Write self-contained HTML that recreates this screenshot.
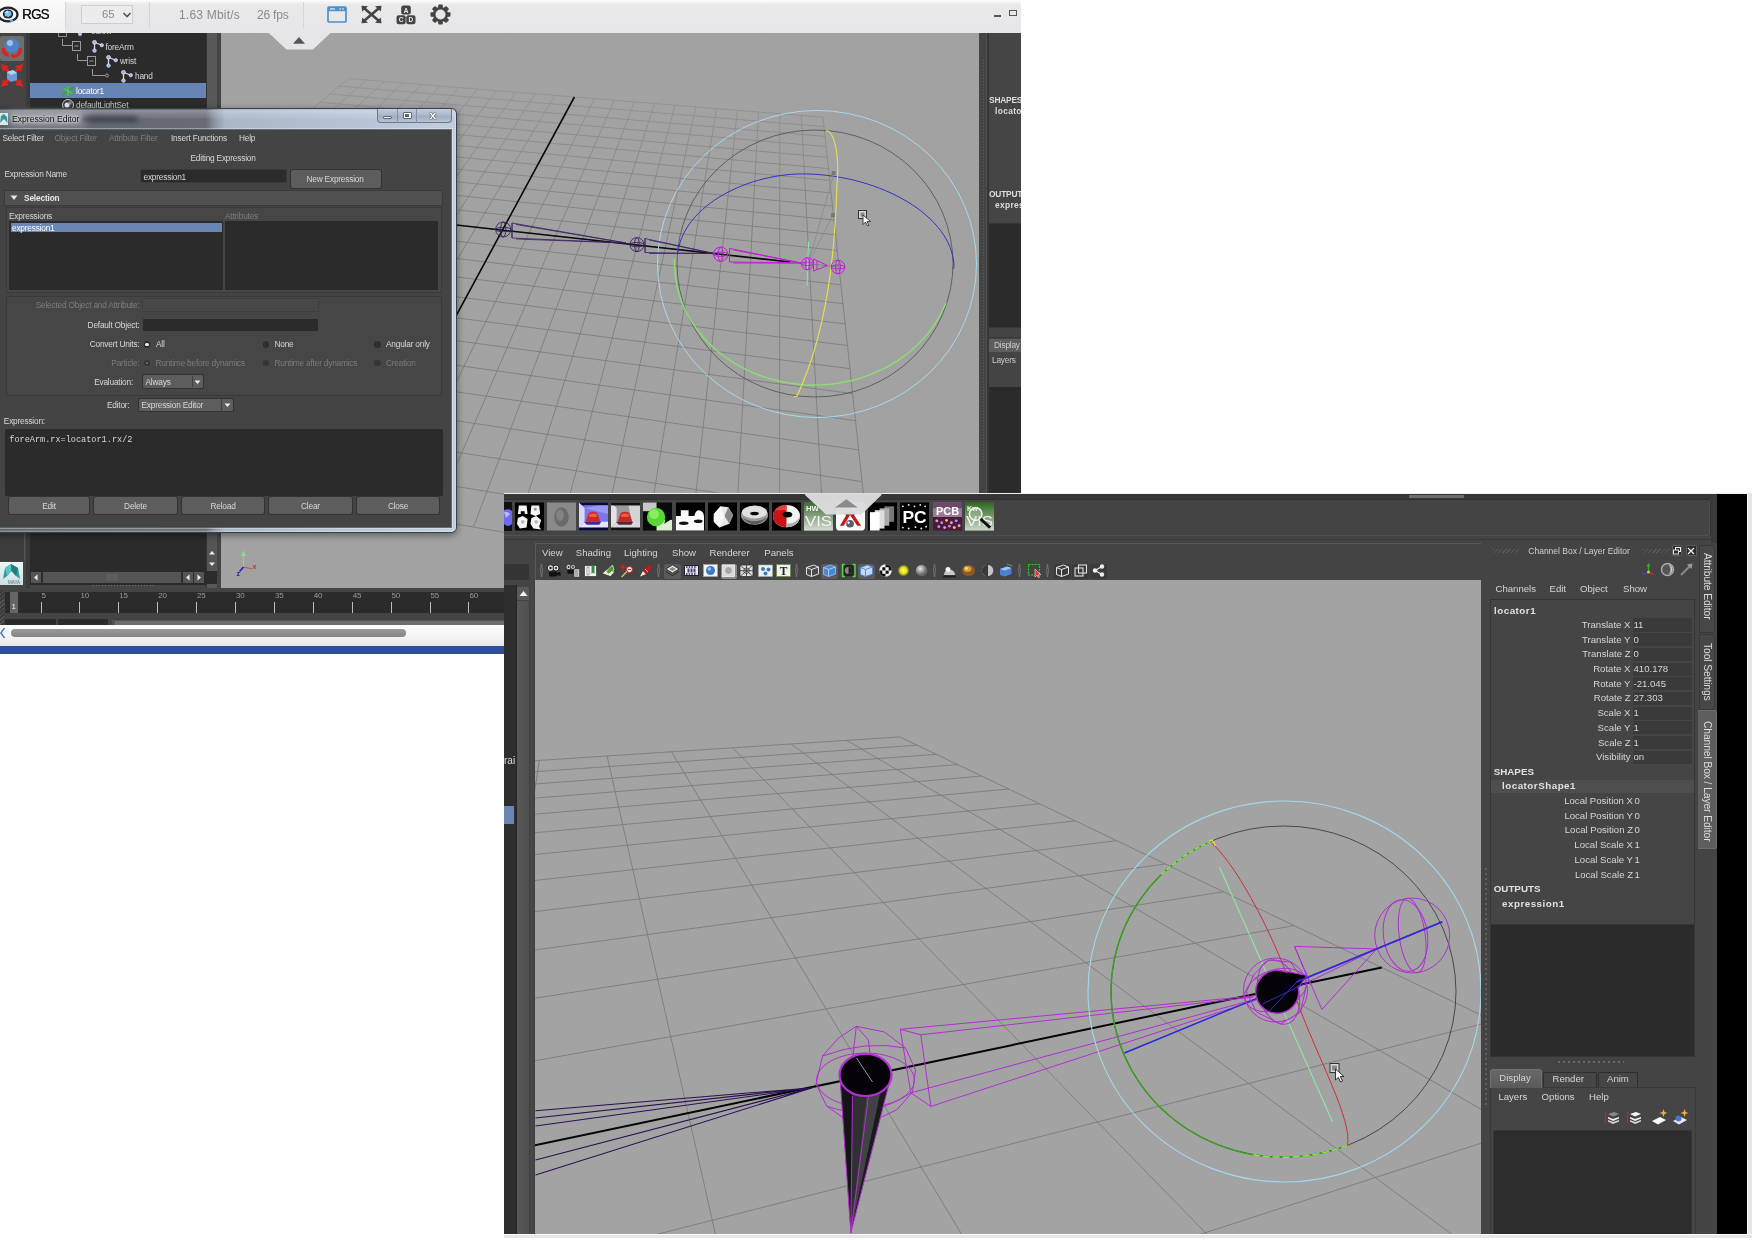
<!DOCTYPE html>
<html><head><meta charset="utf-8"><title>Maya Expression Editor</title>
<style>
html,body{margin:0;padding:0}
body{width:1753px;height:1240px;background:#fff;position:relative;overflow:hidden;font-family:"Liberation Sans",sans-serif}
div,span,svg{position:absolute;box-sizing:border-box}
.t{white-space:nowrap;line-height:1}
#a{will-change:transform;left:0;top:0;width:1021px;height:654px;overflow:hidden;background:#444}
#b{will-change:transform;left:504px;top:493px;width:1248px;height:745px;overflow:hidden;background:#444}
/* image A */
#a .t{font-size:8.3px;color:#d8d8d8;letter-spacing:-0.2px}
#a .dim{color:#7d7d7d}
.fld{background:#2b2b2b;border-radius:1px}
.btn{background:#5d5d5d;border-radius:2px;box-shadow:0 0 0 1px #333;color:#ddd;text-align:center}
/* image B */
#b .t{font-size:9.6px;color:#d6d6d6;letter-spacing:0}
</style></head><body>
<div id="a">
<div style="left:0;top:0;width:1021px;height:33px;background:linear-gradient(#fff 0,#f4f4f5 2px,#e9e9eb 5px,#e6e6e8 100%)"></div>
<div style="left:0;top:1px;width:65px;height:32px;background:linear-gradient(#fafafa,#f0f0f1)"></div>
<div style="left:65px;top:2px;width:1px;height:26px;background:#d6d6d8"></div>
<div style="left:149px;top:2px;width:1px;height:26px;background:#d6d6d8"></div>
<div style="left:303px;top:2px;width:1px;height:26px;background:#d6d6d8"></div>
<svg style="left:0;top:3px" width="20" height="22" viewBox="0 0 20 22"><ellipse cx="8" cy="11.5" rx="9.5" ry="6.8" fill="none" stroke="#222" stroke-width="2.2"/><ellipse cx="8" cy="11" rx="5.2" ry="4.6" fill="#1c2a3a"/><path d="M4.5 9.5 L7.5 7.5 L11 8.5 L11.5 12 L8.5 14 L5 13Z" fill="#7ec3ee"/><path d="M4.5 9.5 L7.5 7.5 L8 10.5Z" fill="#c6e6fa"/><circle cx="11.5" cy="17.5" r="1.6" fill="#6fb4e0"/></svg>
<span class="t" style="left:22px;top:7px;font-size:14.5px;color:#1a1a1a;font-weight:normal;letter-spacing:-0.9px;text-shadow:0.3px 0 0 #1a1a1a;transform-origin:0 0;transform:scaleX(.93)">RGS</span>
<div style="left:81px;top:5px;width:52px;height:19px;border:1px solid #cfcfd2;background:#ececee"></div>
<span class="t" style="left:102px;top:8.5px;font-size:11.5px;color:#8a8a8c">65</span>
<svg style="left:122px;top:11px" width="10" height="8" viewBox="0 0 10 8"><path d="M1.5 2 L5 5.5 L8.5 2" fill="none" stroke="#555" stroke-width="1.6"/></svg>
<span class="t" style="left:179px;top:9px;font-size:12px;letter-spacing:.2px;color:#8a8a8c">1.63 Mbit/s</span>
<span class="t" style="left:257px;top:9px;font-size:12px;color:#8a8a8c">26 fps</span>
<svg style="left:326px;top:5px" width="22" height="19" viewBox="0 0 22 19"><rect x="2" y="2" width="18" height="15" rx="1" fill="none" stroke="#4c8fcf" stroke-width="1.7"/><rect x="2" y="2" width="18" height="4.2" fill="#4c8fcf"/><rect x="4" y="3.3" width="5" height="1.3" fill="#dbe8f5"/><rect x="13.5" y="3.3" width="1.6" height="1.3" fill="#dbe8f5"/><rect x="16.3" y="3.3" width="1.6" height="1.3" fill="#dbe8f5"/></svg>
<svg style="left:361px;top:5px" width="21" height="19" viewBox="0 0 21 19"><path d="M3.5 3.5 L17.5 15.5 M17.5 3.5 L3.5 15.5" stroke="#444" stroke-width="2.6"/><path d="M0.5 0.8 L7 1.2 L1.2 6.5Z M20.5 0.8 L14 1.2 L19.8 6.5Z M0.5 18.2 L7 17.8 L1.2 12.5Z M20.5 18.2 L14 17.8 L19.8 12.5Z" fill="#444"/></svg>
<svg style="left:396px;top:5px" width="20" height="20" viewBox="0 0 20 20"><rect x="5.2" y="0.5" width="9.6" height="9" rx="2.2" fill="#444"/><rect x="0.5" y="10.2" width="9.2" height="9" rx="2.2" fill="#444"/><rect x="10.3" y="10.2" width="9.2" height="9" rx="2.2" fill="#444"/><text x="10" y="7.6" font-size="6.5" font-weight="bold" font-family="Liberation Sans,sans-serif" fill="#eee" text-anchor="middle">A</text><text x="5.1" y="17.2" font-size="6.5" font-weight="bold" font-family="Liberation Sans,sans-serif" fill="#eee" text-anchor="middle">C</text><text x="14.9" y="17.2" font-size="6.5" font-weight="bold" font-family="Liberation Sans,sans-serif" fill="#eee" text-anchor="middle">D</text></svg>
<svg style="left:430px;top:4px" width="21" height="21" viewBox="-10.5 -10.5 21 21"><g fill="#444"><rect x="-2.3" y="-10" width="4.6" height="20" rx="1"/><rect x="-2.3" y="-10" width="4.6" height="20" rx="1" transform="rotate(45)"/><rect x="-2.3" y="-10" width="4.6" height="20" rx="1" transform="rotate(90)"/><rect x="-2.3" y="-10" width="4.6" height="20" rx="1" transform="rotate(135)"/><circle r="7.6"/></g><circle r="5" fill="#e7e7e9"/></svg>
<div style="left:994px;top:15px;width:7px;height:2px;background:#555"></div>
<div style="left:1009px;top:10px;width:8px;height:6px;border:1.5px solid #555"></div>

<div style="left:0;top:33px;width:26px;height:560px;background:#444"></div>
<div style="left:26px;top:33px;width:4px;height:560px;background:#3a3a3a"></div>
<div style="left:30px;top:33px;width:176px;height:552px;background:#2b2b2b"></div>
<div style="left:206px;top:33px;width:15px;height:560px;background:#444"></div>
<div style="left:206px;top:33px;width:1px;height:560px;background:#333"></div><div style="left:207px;top:33px;width:10px;height:560px;background:#585858"></div>
<div style="left:0;top:36px;width:24px;height:25px;background:#6e6e6e;border-radius:2px"></div>
<svg style="left:0;top:36px" width="24" height="25" viewBox="0 0 24 25"><circle cx="12" cy="9.5" r="7" fill="#4f82c8"/><circle cx="10" cy="7" r="3" fill="#9cc0ec"/><path d="M2 12 Q1 20 9 21 L8 17 Q5 16 5 12Z" fill="#d22"/><path d="M22 12 Q23 21 12 22 L11 18 L15 19 Q19 17 19 12Z" fill="#d22"/></svg>
<svg style="left:0;top:63px" width="24" height="25" viewBox="0 0 24 25"><path d="M1 1 L9 3 L3 9Z M23 1 L15 3 L21 9Z M1 24 L9 22 L3 16Z M23 24 L15 22 L21 16Z" fill="#d22"/><path d="M3 3 L10 10 M21 3 L14 10 M3 22 L10 15 M21 22 L14 15" stroke="#d22" stroke-width="2.5"/><path d="M7 9 L13 7 L17 10 L17 17 L11 19 L7 16Z" fill="#6c9ad8"/><path d="M7 9 L13 7 L17 10 L11 12Z" fill="#b4d0f2"/></svg>
<!-- outliner tree -->
<div style="left:30px;top:33px;width:176px;height:10px;overflow:hidden"><span class="t" style="left:61px;top:-6px;color:#bbb">elbow</span><div style="left:28px;top:-5px;width:9px;height:9px;border:1px solid #8a8a8a"></div><div style="left:48px;top:-1px;width:4px;height:4px;border-radius:2px;background:#b8c6e0"></div></div>
<svg style="left:55px;top:33px" width="60" height="50" viewBox="0 0 60 50"><g fill="none" stroke="#9a9a9a" stroke-width="1"><path d="M7.5 6 V12.5 H17"/><rect x="17.5" y="8.5" width="8" height="9"/><path d="M19.5 13 H23.5"/><path d="M22.5 21 V27.5 H32"/><rect x="32.5" y="23.5" width="8" height="9"/><path d="M34.500 28 H38.500"/><path d="M37.500 36 V42.500 H50"/><circle cx="52" cy="42.500" r="1.500"/></g></svg>
<svg style="left:92px;top:40px" width="13" height="13" viewBox="0 0 13 13"><path d="M2.5 2.5 L2.5 10.5 M2.5 2.5 L9.5 5" stroke="#cfd6e4" stroke-width="1.3" fill="none"/><circle cx="2.5" cy="2.3" r="1.9" fill="#9fb2d4" stroke="#e8ecf4" stroke-width=".8"/><circle cx="2.5" cy="10.6" r="1.7" fill="#9fb2d4" stroke="#e8ecf4" stroke-width=".8"/><circle cx="9.8" cy="5.2" r="1.6" fill="#9fb2d4" stroke="#e8ecf4" stroke-width=".8"/></svg><svg style="left:106px;top:55px" width="13" height="13" viewBox="0 0 13 13"><path d="M2.5 2.5 L2.5 10.5 M2.5 2.5 L9.5 5" stroke="#cfd6e4" stroke-width="1.3" fill="none"/><circle cx="2.5" cy="2.3" r="1.9" fill="#9fb2d4" stroke="#e8ecf4" stroke-width=".8"/><circle cx="2.5" cy="10.6" r="1.7" fill="#9fb2d4" stroke="#e8ecf4" stroke-width=".8"/><circle cx="9.8" cy="5.2" r="1.6" fill="#9fb2d4" stroke="#e8ecf4" stroke-width=".8"/></svg><svg style="left:121px;top:70px" width="13" height="13" viewBox="0 0 13 13"><path d="M2.5 2.5 L2.5 10.5 M2.5 2.5 L9.5 5" stroke="#cfd6e4" stroke-width="1.3" fill="none"/><circle cx="2.5" cy="2.3" r="1.9" fill="#9fb2d4" stroke="#e8ecf4" stroke-width=".8"/><circle cx="2.5" cy="10.6" r="1.7" fill="#9fb2d4" stroke="#e8ecf4" stroke-width=".8"/><circle cx="9.8" cy="5.2" r="1.6" fill="#9fb2d4" stroke="#e8ecf4" stroke-width=".8"/></svg>
<span class="t" style="left:105.500px;top:42.500px">foreArm</span>
<span class="t" style="left:120px;top:57px">wrist</span>
<span class="t" style="left:135px;top:71.500px">hand</span>
<div style="left:30px;top:83px;width:176px;height:15px;background:#6785b4"></div>
<svg style="left:61px;top:84px" width="14" height="14" viewBox="-7 -7 14 14"><g stroke="#3da23d" stroke-width="2.2" stroke-linecap="round"><path d="M0 -5.500 V5.500 M-5 -3 L5 3 M-5 3 L5 -3"/></g><g stroke="#7fd07f" stroke-width=".8"><path d="M0 -5 V5 M-4.500 -2.700 L4.500 2.700"/></g></svg>
<span class="t" style="left:76px;top:86.500px;color:#fff">locator1</span>
<svg style="left:61px;top:98px" width="14" height="12" viewBox="0 0 14 12"><circle cx="7" cy="7" r="5.500" fill="#3a3a3a" stroke="#c8c8c8" stroke-width="1"/><circle cx="6" cy="7" r="2.500" fill="#e8e8e8"/><circle cx="9" cy="5" r="1.800" fill="#6d8fc8"/></svg>
<span class="t" style="left:76px;top:101px;color:#c8c8c8">defaultLightSet</span>

<div style="left:221px;top:33px;width:758px;height:556px;background:#a2a2a2"></div>
<svg style="left:221px;top:33px" width="758" height="556" viewBox="221 33 758 556">
<defs><linearGradient id="gfa" gradientUnits="userSpaceOnUse" x1="0" y1="78" x2="0" y2="230"><stop offset="0" stop-color="#939393"/><stop offset="1" stop-color="#7b7b7b"/></linearGradient></defs>
<path d="M348.4 78.5 L-74.9 433.1 M348.4 78.5 L823.0 117.3 M366.4 80.0 L-42.2 438.7 M339.3 86.1 L824.0 126.6 M384.6 81.4 L-9.0 444.4 M329.8 94.0 L825.0 136.4 M403.0 82.9 L24.7 450.2 M319.9 102.3 L826.1 146.6 M421.4 84.5 L58.9 456.1 M309.6 111.0 L827.3 157.3 M440.0 86.0 L93.7 462.0 M298.7 120.1 L828.5 168.6 M458.8 87.5 L129.0 468.1 M287.4 129.6 L829.7 180.4 M477.7 89.1 L164.9 474.2 M275.5 139.5 L831.1 192.9 M496.7 90.6 L201.3 480.5 M263.1 150.0 L832.5 206.1 M515.9 92.2 L238.3 486.8 M250.0 160.9 L834.0 220.1 M535.3 93.8 L275.9 493.3 M236.2 172.5 L835.6 234.8 M554.8 95.4 L314.1 499.8 M221.7 184.6 L837.2 250.5 M574.4 97.0 L353.0 506.5 M206.4 197.5 L839.0 267.1 M594.3 98.6 L392.5 513.2 M190.2 211.0 L840.9 284.8 M614.2 100.2 L432.6 520.1 M173.1 225.3 L842.9 303.7 M634.3 101.9 L473.5 527.1 M154.9 240.5 L845.1 323.9 M654.6 103.6 L515.0 534.2 M135.7 256.7 L847.4 345.5 M675.1 105.2 L557.2 541.5 M115.2 273.8 L849.9 368.7 M695.7 106.9 L600.1 548.8 M93.4 292.1 L852.6 393.7 M716.5 108.6 L643.8 556.3 M70.1 311.6 L855.5 420.7 M737.4 110.3 L688.3 564.0 M45.2 332.5 L858.6 449.9 M758.6 112.1 L733.6 571.7 M18.4 354.9 L862.0 481.6 M779.8 113.8 L779.6 579.6 M-10.3 379.0 L865.7 516.2 M801.3 115.6 L826.5 587.6 M-41.4 405.0 L869.8 554.1 M823.0 117.3 L874.3 595.8 M-74.9 433.1 L874.3 595.8" stroke="url(#gfa)" stroke-width="0.85" fill="none"/>
<path d="M574.4 97.0 L353.0 506.5 M425.0 221.5 L790 262" stroke="#0a0a0a" stroke-width="1.6" fill="none"/>
<ellipse cx="817" cy="264" rx="159.5" ry="153.5" fill="none" stroke="#a8dcec" stroke-width="0.95"/>
<ellipse cx="815" cy="263.5" rx="138" ry="133.5" fill="none" stroke="#585858" stroke-width="0.9"/>
<path d="M678 252 C 684 205, 750 172, 808 174 C 880 176, 952 215, 954 266 C 954 267,953.500 268,953 269" fill="none" stroke="#3034c0" stroke-width="1"/>
<path d="M674.6 258.7 L674.5 266.0 L675.0 273.2 L675.9 280.4 L677.3 287.5 L679.2 294.5 L681.6 301.5 L684.4 308.2 L687.7 314.9 L691.5 321.3 L695.6 327.6 L700.2 333.6 L705.2 339.4 L710.6 344.9 L716.3 350.1 L722.4 355.0 L728.8 359.6 L735.4 363.8 L742.4 367.7 L749.6 371.2 L757.1 374.4 L764.7 377.1 L772.5 379.5 L780.5 381.4 L788.6 383.0 L796.7 384.1 L805.0 384.7 L813.2 385.0 L821.5 384.8 L829.7 384.2 L837.9 383.2 L846.0 381.7 L854.0 379.9 L861.9 377.6 L869.5 374.9 L877.0 371.8 L884.3 368.4 L891.3 364.6 L898.0 360.4 L904.5 355.9 L910.6 351.0 L916.4 345.8 L921.8 340.4 L926.9 334.7 L931.5 328.7 L935.8 322.5 L939.6 316.1 L943.0 309.5 L945.9 302.7" fill="none" stroke="#8bdc74" stroke-width="1.500"/>
<path d="M826 130.500 C 833 131,840 150, 837 185 C 835 250, 828 330, 797 396" fill="none" stroke="#e8e24a" stroke-width="1.1"/>
<path d="M797 396 L794 397" stroke="#e8e24a" stroke-width="1.1"/>
<path d="M834 173 L808 264 L833 215" fill="none" stroke="#8a8a8a" stroke-width="0.8"/>
<rect x="831.500" y="171" width="4" height="4" fill="#7a7a6a"/><rect x="831" y="213" width="4" height="4" fill="#7a7a6a"/>
<path d="M808.600 241.500 L807 286" stroke="#8de8a8" stroke-width="1"/>
<g fill="none" stroke="#3a1f63" stroke-width="0.9"><circle cx="503.2" cy="229.5" r="7.5"/><ellipse cx="503.2" cy="229.5" rx="2.6" ry="7.5"/><ellipse cx="503.2" cy="229.5" rx="7.5" ry="2.2"/></g>
<path d="M512.0 223.0 L626.0 243.0 L512.0 238.0 Z M516.0 224.5 L626.0 243.0 L516.0 239.0 M512.0 223.0 L512.0 238.0" fill="none" stroke="#3a1f63" stroke-width="0.8"/>
<g fill="none" stroke="#3a1f63" stroke-width="0.9"><circle cx="636.9" cy="244.6" r="7.0"/><ellipse cx="636.9" cy="244.6" rx="2.4" ry="7.0"/><ellipse cx="636.9" cy="244.6" rx="7.0" ry="2.1"/></g>
<path d="M645.0 238.5 L714.0 253.5 L645.0 252.5 Z M649.0 240.0 L714.0 253.5 L649.0 253.5 M645.0 238.5 L645.0 252.5" fill="none" stroke="#3a1f63" stroke-width="0.8"/>
<g fill="none" stroke="#c020d0" stroke-width="1"><circle cx="720.7" cy="254.2" r="7.2"/><ellipse cx="720.7" cy="254.2" rx="2.5" ry="7.2"/><ellipse cx="720.7" cy="254.2" rx="7.2" ry="2.2"/></g>
<path d="M729.5 248.4 L801.0 263.0 L729.5 262.0 Z M733.5 249.9 L801.0 263.0 L733.5 263.0 M729.5 248.4 L729.5 262.0" fill="none" stroke="#c020d0" stroke-width="1"/>
<g fill="none" stroke="#c020d0" stroke-width="1"><circle cx="807.5" cy="263.8" r="6.0"/><ellipse cx="807.5" cy="263.8" rx="2.1" ry="6.0"/><ellipse cx="807.5" cy="263.8" rx="6.0" ry="1.8"/></g>
<path d="M813.500 259 L827.500 265.500 L813.500 271 Z M817 260.5 L817 269.500" fill="none" stroke="#c020d0" stroke-width="1"/>
<g fill="none" stroke="#c020d0" stroke-width="1"><circle cx="838.0" cy="267.0" r="6.8"/><ellipse cx="838.0" cy="267.0" rx="2.4" ry="6.8"/><ellipse cx="838.0" cy="267.0" rx="6.8" ry="2.0"/></g>
<g transform="translate(0,-2.500)"><g stroke-width="1.2" fill="none"><path d="M243.500 569.500 V556" stroke="#8ad68a"/><path d="M243.500 569.500 L252 571.5" stroke="#d05050"/><path d="M243.500 569.500 L239.500 574" stroke="#2020c0" stroke-width="1.6"/></g>
<path d="M240.500 558.500 L243.500 553 L246.500 558.500Z" fill="#8ad68a"/>
<text x="252.500" y="571" font-size="7" font-weight="bold" fill="#c83030" font-family="Liberation Sans,sans-serif">x</text><text x="236.500" y="578" font-size="7" font-weight="bold" fill="#2020c0" font-family="Liberation Sans,sans-serif">z</text></g>
<g transform="translate(858,210)"><rect x="0.500" y="0.500" width="8" height="8" fill="#d8d8d8" stroke="#333" stroke-width="1"/><rect x="2.500" y="2.500" width="4" height="4" fill="#888"/><path d="M5 5 L5 14.500 L7.500 12 L9.500 16 L11 15.300 L9 11.500 L12.500 11.500Z" fill="#fff" stroke="#222" stroke-width=".8"/></g>
</svg>
<svg style="left:266px;top:32px" width="66" height="20" viewBox="266 32 66 20"><path d="M268 32 H330.500 V33 L313 49.600 H286.500 L268.800 33Z" fill="#e6e6e8"/><path d="M293 43.800 L299 37 L305 43.800Z" fill="#555"/></svg>
<div style="left:979px;top:33px;width:42px;height:470px;background:#444"></div>
<div style="left:986px;top:33px;width:1px;height:470px;background:#505050"></div><div style="left:987px;top:33px;width:1.500px;height:470px;background:#363636"></div>
<div style="left:988.500px;top:33px;width:33px;height:189px;background:#454545"></div>
<div style="left:987.500px;top:222.500px;width:34px;height:105px;background:#2b2b2b;border:1px solid #363636;border-right:none"></div>
<div style="left:987.500px;top:336.500px;width:34px;height:1px;background:#383838"></div><div style="left:982.500px;top:60px;width:1.500px;height:400px;background:repeating-linear-gradient(0deg,#5a5a5a 0 1.500px,transparent 1.500px 3px)"></div>
<div style="left:988.500px;top:339px;width:33px;height:13px;background:#5d5d5d"></div>
<div style="left:988.500px;top:387px;width:33px;height:108px;background:#2b2b2b"></div>
<span class="t" style="left:989px;top:96px;font-weight:bold;font-size:8.400px;color:#ddd">SHAPES</span>
<span class="t" style="left:995px;top:107px;font-weight:bold;font-size:8.400px;letter-spacing:.35px;color:#ddd">locatorShape1</span>
<span class="t" style="left:989px;top:190px;font-weight:bold;font-size:8.400px;color:#ddd">OUTPUTS</span>
<span class="t" style="left:995px;top:201px;font-weight:bold;font-size:8.400px;letter-spacing:.35px;color:#ddd">expression1</span>
<span class="t" style="left:994px;top:341px;color:#ccc">Display</span>
<span class="t" style="left:992px;top:356px;color:#ccc">Layers</span>

<!-- under expression editor -->
<div style="left:0;top:533px;width:25px;height:28px;background:#3d3d3d;border-right:1px solid #555"></div>
<div style="left:0;top:562px;width:23px;height:23px;background:linear-gradient(#f0f6f6,#c8e0e0)"></div>
<svg style="left:0;top:562px" width="23" height="23" viewBox="0 0 23 23"><path d="M3 17 L5 6 L11 2 L18 6 L20 17 L16 14 L11.500 9 L7 14Z" fill="#2f9a98"/><path d="M5 6 L11 2 L11.500 9 L7 14Z" fill="#5cc4c0"/><path d="M11 2 L18 6 L16 14 L11.500 9Z" fill="#1f7f80"/><text x="8" y="22" font-size="4.500" fill="#567" font-family="Liberation Sans,sans-serif">MAYA</text></svg>
<div style="left:207px;top:533px;width:10px;height:14px;background:#555"></div>
<div style="left:207px;top:548px;width:10px;height:10px;background:#555"></div>
<div style="left:207px;top:559px;width:10px;height:11px;background:#555"></div>
<svg style="left:207px;top:548px" width="10" height="22" viewBox="0 0 10 22"><path d="M2 6.500 L5 3 L8 6.500Z M2 14.500 L5 18 L8 14.500Z" fill="#eee"/></svg>
<div style="left:31px;top:572px;width:10px;height:11px;background:#555"></div>
<div style="left:43px;top:572px;width:138px;height:11px;background:#555"></div>
<div style="left:183px;top:572px;width:10px;height:11px;background:#555"></div>
<div style="left:194px;top:572px;width:10px;height:11px;background:#555"></div>
<div style="left:205px;top:571px;width:12px;height:13px;background:#2b2b2b"></div>
<svg style="left:31px;top:572px" width="175" height="11" viewBox="0 0 175 11"><path d="M6.500 2.500 L3 5.500 L6.500 8.500Z M158.500 2.500 L155 5.500 L158.500 8.500Z M166.500 2.500 L170 5.500 L166.500 8.500Z" fill="#eee"/><path d="M76 2 V9 M78 2 V9 M80 2 V9 M82 2 V9 M84 2 V9 M86 2 V9" stroke="#666" stroke-width="1"/></svg>
<div style="left:93px;top:585px;width:61px;height:1px;background:repeating-linear-gradient(90deg,#777 0 1px,transparent 1px 3px)"></div>
<!-- timeline -->
<div style="left:0;top:588px;width:1021px;height:66px;background:#444"></div>
<div style="left:0;top:590px;width:4px;height:45px;background:repeating-linear-gradient(135deg,#555 0 1px,#3a3a3a 1px 3px)"></div>
<div style="left:5px;top:592px;width:1016px;height:21px;background:#2b2b2b"></div>
<div style="left:10px;top:592px;width:8px;height:21px;background:#666"></div>
<span class="t" style="left:11.500px;top:603px;color:#eee;font-size:8px">1</span>
<div style="left:40.5px;top:602px;width:1px;height:11px;background:#bbb"></div><span class="t" style="left:41.5px;top:592px;color:#999;font-size:8px">5</span><div style="left:79.4px;top:602px;width:1px;height:11px;background:#bbb"></div><span class="t" style="left:80.4px;top:592px;color:#999;font-size:8px">10</span><div style="left:118.3px;top:602px;width:1px;height:11px;background:#bbb"></div><span class="t" style="left:119.3px;top:592px;color:#999;font-size:8px">15</span><div style="left:157.2px;top:602px;width:1px;height:11px;background:#bbb"></div><span class="t" style="left:158.2px;top:592px;color:#999;font-size:8px">20</span><div style="left:196.1px;top:602px;width:1px;height:11px;background:#bbb"></div><span class="t" style="left:197.1px;top:592px;color:#999;font-size:8px">25</span><div style="left:235.0px;top:602px;width:1px;height:11px;background:#bbb"></div><span class="t" style="left:236.0px;top:592px;color:#999;font-size:8px">30</span><div style="left:273.9px;top:602px;width:1px;height:11px;background:#bbb"></div><span class="t" style="left:274.9px;top:592px;color:#999;font-size:8px">35</span><div style="left:312.8px;top:602px;width:1px;height:11px;background:#bbb"></div><span class="t" style="left:313.8px;top:592px;color:#999;font-size:8px">40</span><div style="left:351.7px;top:602px;width:1px;height:11px;background:#bbb"></div><span class="t" style="left:352.7px;top:592px;color:#999;font-size:8px">45</span><div style="left:390.6px;top:602px;width:1px;height:11px;background:#bbb"></div><span class="t" style="left:391.6px;top:592px;color:#999;font-size:8px">50</span><div style="left:429.5px;top:602px;width:1px;height:11px;background:#bbb"></div><span class="t" style="left:430.5px;top:592px;color:#999;font-size:8px">55</span><div style="left:468.4px;top:602px;width:1px;height:11px;background:#bbb"></div><span class="t" style="left:469.4px;top:592px;color:#999;font-size:8px">60</span>
<div style="left:5px;top:619px;width:51px;height:8px;background:#2b2b2b"></div>
<div style="left:58px;top:619px;width:50px;height:8px;background:#2b2b2b"></div>
<div style="left:112px;top:620px;width:909px;height:8px;background:#555"></div>
<div style="left:115px;top:621px;width:906px;height:6px;background:#6e6e6e"></div>
<!-- browser-like scrollbar -->
<div style="left:0;top:624.500px;width:1021px;height:22px;background:linear-gradient(#fdfdfd,#f2f2f4 60%,#e4e4ea)"></div>
<div style="left:11px;top:629px;width:395px;height:7.500px;border-radius:4px;background:linear-gradient(#9a9a9c,#858587)"></div>
<svg style="left:0;top:627px" width="6" height="12" viewBox="0 0 6 12"><path d="M4.5 1 L0.8 6 L4.5 11" fill="none" stroke="#3b78b8" stroke-width="1.300"/></svg>
<div style="left:0;top:646px;width:1021px;height:8px;background:#2f4f99"></div>

<!-- Expression Editor window -->
<div style="left:-8px;top:108.5px;width:463.500px;height:423.500px;border-radius:5px;background:linear-gradient(90deg,#5c6068 0,#62666f 60px,#666b75 214px,#8a929f 222px,#aab5c6 233px,#b4bfd1 330px,#c0cbdc 455px);box-shadow:0 0 0 1px #39414d,0 2px 7px 1px rgba(0,0,0,.45),inset 0 -1.500px 0 rgba(255,255,255,.28),inset -1px 0 0 rgba(255,255,255,.3)"></div>
<div style="left:-8px;top:109.500px;width:462.500px;height:21px;border-radius:5px 5px 0 0;background:linear-gradient(90deg,#5c6068 0,#62666f 60px,#666b75 214px,#8a929f 222px,#aab5c6 233px,#b4bfd1 330px,#c0cbdc 455px)"></div>
<div style="left:-8px;top:109.500px;width:462.500px;height:9px;border-radius:5px 5px 0 0;background:linear-gradient(rgba(255,255,255,.28),rgba(255,255,255,.04))"></div>
<div style="left:8px;top:112px;width:80px;height:14px;border-radius:7px;background:rgba(235,238,245,.38);filter:blur(4px)"></div>
<div style="left:82px;top:116px;width:56px;height:6px;border-radius:3px;background:rgba(30,34,44,.55);filter:blur(2.500px)"></div>
<svg style="left:0;top:113px" width="9" height="13" viewBox="0 0 9 13"><rect x="0" y="0" width="8" height="12" fill="#dfeaea"/><path d="M0 10 L1 3 L4 1 L7 4 L7.500 10 L4 6Z" fill="#2f9a98"/></svg>
<span class="t" style="left:12px;top:114.500px;font-size:8.600px;color:#0c0c10;letter-spacing:0;text-shadow:0 0 3px #fff,0 0 5px #fff">Expression Editor</span>
<!-- caption buttons -->
<div style="left:376.500px;top:108.500px;width:75px;height:14.500px;border:1px solid #6c7888;border-top:none;border-radius:0 0 4px 4px;background:linear-gradient(#c3cede,#a9b6c9 50%,#9eacc2 52%,#b5c2d6)"></div>
<div style="left:397px;top:109px;width:1px;height:13.500px;background:#8593a6"></div>
<div style="left:416px;top:109px;width:1px;height:13.500px;background:#8593a6"></div>
<div style="left:383px;top:115.500px;width:8.500px;height:3.500px;background:#fff;border:1px solid #5a6472;border-radius:1px"></div>
<div style="left:402.500px;top:111.500px;width:9px;height:7.500px;background:#fff;border:1px solid #5a6472;border-radius:1px"></div>
<div style="left:405px;top:114px;width:4px;height:2.500px;background:#5a6472"></div>
<span class="t" style="left:430px;top:109.500px;font-size:10.500px;font-weight:bold;color:#fff;text-shadow:0 0 1px #39414d,0 0 1px #39414d,0 0 1.500px #39414d;letter-spacing:0;transform:scaleX(1.15)">x</span>
<!-- body -->
<div style="left:-2px;top:130px;width:452.800px;height:397px;background:#444;box-shadow:0 0 0 1px rgba(70,80,95,.8),0 0 0 2px rgba(255,255,255,.35)"></div>
<span class="t" style="left:2.500px;top:133.500px">Select Filter</span>
<span class="t dim" style="left:54.500px;top:133.500px">Object Filter</span>
<span class="t dim" style="left:109px;top:133.500px">Attribute Filter</span>
<span class="t" style="left:171px;top:133.500px">Insert Functions</span>
<span class="t" style="left:239px;top:133.500px">Help</span>
<span class="t" style="left:190.500px;top:154px">Editing Expression</span>
<span class="t" style="left:4.500px;top:169.500px">Expression Name</span>
<div class="fld" style="left:141px;top:170px;width:145px;height:12px;box-shadow:0 0 0 1px #3a3a3a"></div>
<span class="t" style="left:143.500px;top:172.500px">expression1</span>
<div class="btn" style="left:291px;top:169.500px;width:90px;height:18.500px"></div>
<span class="t" style="left:306.500px;top:174.500px">New Expression</span>
<!-- Selection header -->
<div style="left:5px;top:191px;width:436.500px;height:13.500px;background:#505050;box-shadow:0 0 0 1px #3a3a3a"></div>
<svg style="left:10px;top:194.500px" width="8" height="6" viewBox="0 0 8 6"><path d="M0.500 0.500 H7.500 L4 5Z" fill="#e6e6e6"/></svg>
<span class="t" style="left:24px;top:193.500px;font-weight:bold;color:#e6e6e6;letter-spacing:-0.150px">Selection</span>
<!-- frame 1 -->
<div style="left:6px;top:206.500px;width:436px;height:86px;border:1px solid #3a3a3a;background:#464646"></div>
<span class="t" style="left:9px;top:211.500px">Expressions</span>
<span class="t dim" style="left:225px;top:211.500px">Attributes</span>
<div class="fld" style="left:9px;top:221px;width:213.500px;height:69px"></div>
<div class="fld" style="left:225px;top:221px;width:212.500px;height:69px"></div>
<div style="left:10.500px;top:222.500px;width:211.500px;height:9.800px;background:#6a86b5"></div>
<span class="t" style="left:12px;top:224px;color:#fff">expression1</span>
<!-- frame 2 -->
<div style="left:6px;top:296px;width:436px;height:100px;border:1px solid #3a3a3a;background:#464646"></div>
<span class="t dim" style="left:0;top:301px;width:139.500px;text-align:right">Selected Object and Attribute:</span>
<div style="left:143px;top:299px;width:175px;height:12px;background:#484848;box-shadow:0 0 0 1px #3f3f3f"></div>
<span class="t" style="left:0;top:321px;width:139.500px;text-align:right">Default Object:</span>
<div class="fld" style="left:143px;top:319px;width:175px;height:12px"></div>
<span class="t" style="left:0;top:340px;width:139.500px;text-align:right">Convert Units:</span>
<div style="left:143.500px;top:341px;width:6.500px;height:6.500px;border-radius:50%;background:#2b2b2b"></div><div style="left:145px;top:342.500px;width:3.500px;height:3.500px;border-radius:50%;background:#eee"></div>
<span class="t" style="left:156px;top:340px">All</span>
<div style="left:262.500px;top:341px;width:6.500px;height:6.500px;border-radius:50%;background:#2e2e2e"></div>
<span class="t" style="left:274.500px;top:340px">None</span>
<div style="left:374px;top:341px;width:6.500px;height:6.500px;border-radius:50%;background:#2e2e2e"></div>
<span class="t" style="left:386px;top:340px">Angular only</span>
<span class="t dim" style="left:0;top:358.500px;width:139.500px;text-align:right">Particle:</span>
<div style="left:143.500px;top:359.500px;width:6.500px;height:6.500px;border-radius:50%;background:#353535"></div><div style="left:145.500px;top:361.500px;width:2.500px;height:2.500px;border-radius:50%;background:#777"></div>
<span class="t dim" style="left:155.500px;top:358.500px">Runtime before dynamics</span>
<div style="left:262.500px;top:359.500px;width:6.500px;height:6.500px;border-radius:50%;background:#353535"></div>
<span class="t dim" style="left:274.500px;top:358.500px">Runtime after dynamics</span>
<div style="left:374px;top:359.500px;width:6.500px;height:6.500px;border-radius:50%;background:#353535"></div>
<span class="t dim" style="left:386px;top:358.500px">Creation</span>
<span class="t" style="left:0;top:377.500px;width:133px;text-align:right">Evaluation:</span>
<div style="left:142.500px;top:375px;width:60.500px;height:12.500px;background:#5d5d5d;border-radius:1.500px;box-shadow:0 0 0 1px #333"></div>
<div style="left:191.500px;top:375.500px;width:1px;height:11.500px;background:#3e3e3e"></div>
<svg style="left:194px;top:379.500px" width="7" height="5" viewBox="0 0 7 5"><path d="M0.500 0.500 H6.500 L3.500 4Z" fill="#eee"/></svg>
<span class="t" style="left:145.500px;top:377.500px">Always</span>
<span class="t" style="left:0;top:401px;width:129.500px;text-align:right">Editor:</span>
<div style="left:139px;top:398.500px;width:94px;height:12.500px;background:#5d5d5d;border-radius:1.500px;box-shadow:0 0 0 1px #333"></div>
<div style="left:221px;top:399px;width:1px;height:11.500px;background:#3e3e3e"></div>
<svg style="left:224px;top:403px" width="7" height="5" viewBox="0 0 7 5"><path d="M0.500 0.500 H6.500 L3.500 4Z" fill="#eee"/></svg>
<span class="t" style="left:141.500px;top:401px">Expression Editor</span>
<span class="t" style="left:3.800px;top:417px">Expression:</span>
<div class="fld" style="left:5px;top:429px;width:438px;height:66.800px"></div>
<span class="t" style="left:9.300px;top:436px;font-family:'Liberation Mono',monospace;font-size:8.550px;letter-spacing:0;color:#d8d8d8">foreArm.rx=locator1.rx/2</span>
<div class="btn" style="left:9px;top:496.800px;width:80px;height:17px"></div><span class="t" style="left:9px;top:501.500px;width:80px;text-align:center">Edit</span>
<div class="btn" style="left:94px;top:496.800px;width:83px;height:17px"></div><span class="t" style="left:94px;top:501.500px;width:83px;text-align:center">Delete</span>
<div class="btn" style="left:182px;top:496.800px;width:82px;height:17px"></div><span class="t" style="left:182px;top:501.500px;width:82px;text-align:center">Reload</span>
<div class="btn" style="left:269px;top:496.800px;width:83px;height:17px"></div><span class="t" style="left:269px;top:501.500px;width:83px;text-align:center">Clear</span>
<div class="btn" style="left:357px;top:496.800px;width:82px;height:17px"></div><span class="t" style="left:357px;top:501.500px;width:82px;text-align:center">Close</span>
</div>
<div id="b">
<div style="left:0px;top:0px;width:1245px;height:1px;background:#f2f2f2"></div>
<div style="left:0px;top:1px;width:1213px;height:5px;background:#363636"></div>
<div style="left:-1px;top:6px;width:1208px;height:37.5px;background:#444;border:1px solid #303030;border-radius:0 3px 3px 0;box-shadow:inset -1px -1px 0 #505050"></div>
<div style="left:905px;top:1.5px;width:55px;height:3.5px;background:#6c6c6c"></div>
<svg style="left:0px;top:9px" width="8" height="29" viewBox="0 0 8 29"><rect width="8" height="29" fill="#111"/><path d="M0 8 Q6 6 8 9 V22 Q4 26 0 22Z" fill="#6a6af0"/><path d="M0 10 Q4 9 6 12 L2 16Z" fill="#b8b8ff"/></svg>
<svg style="left:11px;top:9px" width="29" height="29" viewBox="0 0 30 29"><rect width="30" height="29" fill="#000"/><g fill="#f4f4f4"><path d="M4 3 H12 L13 12 H10 V9 H6 V12 H3Z"/><path d="M17 3 H25 L26 12 L21 14 L16 12Z"/><path d="M3 16 L8 14 L13 17 L12 26 L5 27 L2 22Z"/><path d="M17 16 L22 14 L27 18 L25 25 L27 28 L19 27 L16 22Z"/></g><circle cx="21" cy="7" r="1.5" fill="#999"/><circle cx="8" cy="20" r="2" fill="#bbb"/><circle cx="22" cy="20" r="2" fill="#bbb"/></svg>
<svg style="left:43.12px;top:9px" width="29" height="29" viewBox="0 0 30 29"><rect width="30" height="29" fill="#8a8a8a"/><ellipse cx="15" cy="15" rx="7.5" ry="10" fill="#6a6a6a"/><ellipse cx="13.500" cy="13" rx="4" ry="6" fill="#828282"/></svg>
<svg style="left:75.24px;top:9px" width="29" height="29" viewBox="0 0 30 29"><rect width="30" height="29" fill="#7a78e8"/><rect y="0" width="30" height="3" fill="#0a0a30"/><path d="M0 0 L6 6 V20 L0 26Z" fill="#d8d8f8"/><rect x="6" y="3" width="24" height="18" fill="#7a78e8"/><path d="M6 6 L20 3 H30 V12Z" fill="#a8a6f4" opacity=".7"/><path d="M0 26 L6 20 H30 V26Z" fill="#e4e4fa"/><path d="M7 20 L10 11 Q15 8 19 11 L22 20Z" fill="#d02828"/><path d="M10 13 Q15 10 19 13 L18 15 H11Z" fill="#f06040"/><path d="M5 20 H23 L21 23 H8Z" fill="#3a2aa8"/><rect y="26" width="30" height="3" fill="#0a0a30"/></svg>
<svg style="left:107.36px;top:9px" width="29" height="29" viewBox="0 0 30 29"><rect width="30" height="29" fill="#9a9a9c"/><path d="M0 0 L6 6 V20 L0 26Z" fill="#e8e0e8"/><rect x="6" y="3" width="24" height="18" fill="#9a9a9c"/><path d="M18 3 H30 V21 H22Z" fill="#e6e6e6" opacity=".75"/><rect y="0" width="30" height="3" fill="#111"/><path d="M0 26 L6 20 H30 V26Z" fill="#d8d8dc"/><path d="M7 20 L10 11 Q15 8 19 11 L22 20Z" fill="#c82626"/><path d="M10 13 Q15 10 19 13 L18 15 H11Z" fill="#ee5a3c"/><path d="M5 20 H23 L21 23 H8Z" fill="#4a2a3a"/><rect y="26" width="30" height="3" fill="#111"/></svg>
<svg style="left:139.48px;top:9px" width="29" height="29" viewBox="0 0 30 29"><rect width="30" height="29" fill="#0a0a0a"/><rect width="14" height="9" fill="#c8c8c8"/><rect x="14" y="18" width="16" height="11" fill="#d8f0d0"/><circle cx="13.500" cy="15" r="9.500" fill="#58d838"/><circle cx="11.500" cy="12" r="5" fill="#88f060"/><path d="M20 7 Q26 12 22 22 L28 18 V6Z" fill="#0a0a0a"/></svg>
<svg style="left:171.6px;top:9px" width="29" height="29" viewBox="0 0 30 29"><rect width="30" height="29" fill="#000"/><path d="M0 29 V14 H5 V8 H13 V14 H19 Q20 8 24 8 Q29 9 29 15 V29Z" fill="#fafafa"/><ellipse cx="8" cy="21.500" rx="5" ry="1.700" fill="#111"/><ellipse cx="23" cy="19.500" rx="4.500" ry="1.800" fill="#111"/></svg>
<svg style="left:203.72px;top:9px" width="29" height="29" viewBox="0 0 30 29"><rect width="30" height="29" fill="#000"/><path d="M6 12 L13 4 L21 5 L26 13 L22 22 L12 26 L6 20Z" fill="#e8e8e8"/><path d="M17 14 L21 5 L26 13 L22 22 Z" fill="#8a8a8a"/><path d="M6 12 L13 4 L17 14 L12 26 L6 20Z" fill="#f8f8f8"/></svg>
<svg style="left:235.84px;top:9px" width="29" height="29" viewBox="0 0 30 29"><rect width="30" height="29" fill="#000"/><ellipse cx="15" cy="13" rx="14" ry="10" fill="#9a9a9a"/><ellipse cx="15" cy="10" rx="13" ry="6.500" fill="#e0e0e0"/><ellipse cx="15" cy="11.500" rx="4.500" ry="1.800" fill="#050505"/><path d="M1.500 15 Q15 30 28.500 15 Q15 24 1.500 15Z" fill="#5a5a5a"/></svg>
<svg style="left:267.96px;top:9px" width="29" height="29" viewBox="0 0 30 29"><rect width="30" height="29" fill="#000"/><ellipse cx="15" cy="14" rx="14" ry="11.500" fill="#f2f2f2"/><path d="M15 2.500 A14 11.500 0 0 0 15 25.500Z" fill="#c81414"/><path d="M3 8 Q8 3 15 2.500 V8Z" fill="#e84040"/><ellipse cx="16" cy="12.500" rx="5" ry="3" fill="#050505"/><path d="M15 25.500 A14 11.500 0 0 0 29 14 Q26 22 15 22Z" fill="#b0b0b0"/></svg>
<svg style="left:300.08px;top:9px" width="29" height="29" viewBox="0 0 30 29"><rect width="30" height="29" fill="#6a8a62"/><rect width="30" height="29" fill="url(#gvis)"/><text x="2" y="9" font-size="8" font-weight="bold" fill="#f0fff0" font-family="Liberation Sans,sans-serif">HW</text><text x="1" y="24" font-size="15.500" fill="#f4f4f4" font-family="Liberation Sans,sans-serif" textLength="28" lengthAdjust="spacingAndGlyphs">VIS</text></svg>
<svg style="left:332.2px;top:9px" width="29" height="29" viewBox="0 0 30 29"><rect width="30" height="29" fill="#444"/><rect width="30" height="29" rx="4" fill="#fafafa"/><path d="M4 24 L13 9 L16 9 L26 24 L22 24 L14.500 13 L8 24Z" fill="#c81818"/><circle cx="14.500" cy="22" r="4" fill="#506070"/><circle cx="13" cy="21" r="1.200" fill="#fff"/><path d="M9 10 L12 14 M20 10 L17 14" stroke="#334" stroke-width="1.500"/></svg>
<svg style="left:364.32px;top:9px" width="29" height="29" viewBox="0 0 30 29"><rect width="30" height="29" fill="#000"/><rect x="17" y="4" width="10" height="16" fill="#777"/><rect x="12" y="6" width="10" height="18" fill="#aaa"/><rect x="7" y="8" width="10" height="19" fill="#ddd"/><rect x="2" y="10" width="10" height="19" fill="#fff"/></svg>
<svg style="left:396.44px;top:9px" width="29" height="29" viewBox="0 0 30 29"><rect width="30" height="29" fill="#000"/><g fill="#e8e8e8"><circle cx="3" cy="4" r="1"/><circle cx="9" cy="2.500" r="1"/><circle cx="15" cy="4" r="1"/><circle cx="21" cy="2.500" r="1"/><circle cx="26" cy="4" r="1"/><circle cx="3" cy="26" r="1"/><circle cx="9" cy="27" r="1"/><circle cx="16" cy="25.500" r="1"/><circle cx="22" cy="27" r="1"/><circle cx="27" cy="25" r="1"/></g><text x="2.500" y="21.500" font-size="17" font-weight="bold" fill="#fff" font-family="Liberation Sans,sans-serif" textLength="25" lengthAdjust="spacingAndGlyphs">PC</text></svg>
<svg style="left:428.56px;top:9px" width="29" height="29" viewBox="0 0 30 29"><rect width="30" height="29" fill="#4a1a3a"/><rect width="30" height="15" fill="#9a7a9a"/><rect width="30" height="6" fill="#6a4a6a"/><text x="3" y="12.500" font-size="11" font-weight="bold" fill="#fff" font-family="Liberation Sans,sans-serif" textLength="24" lengthAdjust="spacingAndGlyphs">PCB</text><g><circle cx="4" cy="19" r="1.500" fill="#e8a0c0"/><circle cx="9" cy="21" r="1.500" fill="#c080e0"/><circle cx="14" cy="18.500" r="1.500" fill="#f0d060"/><circle cx="19" cy="21" r="1.500" fill="#e8a0c0"/><circle cx="24" cy="19" r="1.500" fill="#a0a0f0"/><circle cx="6" cy="25" r="1.500" fill="#a0a0f0"/><circle cx="12" cy="26" r="1.500" fill="#e8a0c0"/><circle cx="17" cy="24.500" r="1.500" fill="#c080e0"/><circle cx="22" cy="26" r="1.500" fill="#f0d060"/><circle cx="27" cy="24" r="1.500" fill="#e8a0c0"/></g></svg>
<svg style="left:460.68px;top:9px" width="29" height="29" viewBox="0 0 30 29"><rect width="30" height="29" fill="#3a6a2a"/><rect width="30" height="29" fill="url(#gvis2)"/><text x="1" y="24" font-size="15.500" fill="#eef4ee" font-family="Liberation Sans,sans-serif" textLength="28" lengthAdjust="spacingAndGlyphs">VIS</text><text x="2" y="9" font-size="7.500" font-weight="bold" fill="#f0fff0" font-family="Liberation Sans,sans-serif">Kw</text><circle cx="11" cy="12" r="6.500" fill="rgba(200,220,200,.35)" stroke="#f4f4f4" stroke-width="1.600"/><path d="M16 17 L26 26" stroke="#111" stroke-width="3"/></svg>
<svg width="0" height="0" style="left:0;top:0"><defs><linearGradient id="gvis" x1="0" y1="0" x2="0" y2="1"><stop offset="0" stop-color="#3e6a34"/><stop offset=".5" stop-color="#8aa284"/><stop offset="1" stop-color="#d6dcd4"/></linearGradient><linearGradient id="gvis2" x1="0" y1="0" x2="0" y2="1"><stop offset="0" stop-color="#2e6a1c"/><stop offset=".5" stop-color="#7a9a72"/><stop offset="1" stop-color="#d0d8ce"/></linearGradient></defs></svg>
<svg style="left:299px;top:0px" width="82" height="23" viewBox="803 493 82 23"><path d="M805 493 H881.500 V495 L861.500 514.400 H826 L805 495Z" fill="#dcdcde" fill-opacity=".97"/><path d="M835 507.500 L846.300 499.300 L857.700 507.500Z" fill="#8a8a8a"/></svg>
<div style="left:0px;top:43px;width:1213px;height:8px;background:#444"></div>
<div style="left:0px;top:46px;width:1213px;height:1px;background:#3a3a3a"></div>
<div style="left:0px;top:50px;width:30px;height:691px;background:#444"></div>
<div style="left:0px;top:71px;width:25px;height:15.5px;background:#343434;border-radius:2px"></div>
<div style="left:0px;top:92px;width:11.5px;height:649px;background:#2e2e2e"></div>
<div style="left:11.5px;top:92px;width:1.5px;height:649px;background:#262626"></div>
<div style="left:13px;top:93.5px;width:12px;height:13.5px;background:#5a5a5a;border-radius:1px"></div>
<svg style="left:14.5px;top:97px" width="9" height="7" viewBox="0 0 9 7"><path d="M0.500 6 L4.500 1 L8.500 6Z" fill="#f4f4f4"/></svg>
<div style="left:13px;top:108px;width:12px;height:633px;background:linear-gradient(90deg,#585858,#505050)"></div>
<div style="left:25px;top:92px;width:5.5px;height:649px;background:linear-gradient(90deg,#3e3e3e,#4a4a4a 40%,#404040)"></div>
<span class="t" style="left:0px;top:263px;color:#ddd;font-size:10px">rai</span>
<div style="left:0px;top:312.5px;width:10px;height:18px;background:#6a86b5"></div>
<div style="left:30.5px;top:50px;width:946px;height:37px;background:#444;border-top:1px solid #5a5a5a;border-left:1px solid #5a5a5a"></div>
<span class="t" style="left:38px;top:54.5px;">View</span>
<span class="t" style="left:71.8px;top:54.5px;">Shading</span>
<span class="t" style="left:120px;top:54.5px;">Lighting</span>
<span class="t" style="left:168px;top:54.5px;">Show</span>
<span class="t" style="left:205.6px;top:54.5px;">Renderer</span>
<span class="t" style="left:260.3px;top:54.5px;">Panels</span>
<svg style="left:35px;top:70px" width="5" height="15" viewBox="0 0 5 15"><path d="M2.500 1 Q0.500 7.500 2.500 14 Q4.500 7.500 2.500 1Z" fill="none" stroke="#7a7a7a" stroke-width=".8"/></svg>
<svg style="left:152px;top:70px" width="5" height="15" viewBox="0 0 5 15"><path d="M2.500 1 Q0.500 7.500 2.500 14 Q4.500 7.500 2.500 1Z" fill="none" stroke="#7a7a7a" stroke-width=".8"/></svg>
<svg style="left:290px;top:70px" width="5" height="15" viewBox="0 0 5 15"><path d="M2.500 1 Q0.500 7.500 2.500 14 Q4.500 7.500 2.500 1Z" fill="none" stroke="#7a7a7a" stroke-width=".8"/></svg>
<svg style="left:428px;top:70px" width="5" height="15" viewBox="0 0 5 15"><path d="M2.500 1 Q0.500 7.500 2.500 14 Q4.500 7.500 2.500 1Z" fill="none" stroke="#7a7a7a" stroke-width=".8"/></svg>
<svg style="left:513px;top:70px" width="5" height="15" viewBox="0 0 5 15"><path d="M2.500 1 Q0.500 7.500 2.500 14 Q4.500 7.500 2.500 1Z" fill="none" stroke="#7a7a7a" stroke-width=".8"/></svg>
<svg style="left:541px;top:70px" width="5" height="15" viewBox="0 0 5 15"><path d="M2.500 1 Q0.500 7.500 2.500 14 Q4.500 7.500 2.500 1Z" fill="none" stroke="#7a7a7a" stroke-width=".8"/></svg>
<svg style="left:42px;top:70px" width="15" height="15" viewBox="0 0 15 15"><circle cx="4.500" cy="5" r="3.300" fill="#ddd" stroke="#222" stroke-width="1"/><circle cx="10" cy="5" r="3" fill="#ddd" stroke="#222" stroke-width="1"/><circle cx="4.500" cy="5" r="1.200" fill="#222"/><circle cx="10" cy="5" r="1.100" fill="#222"/><rect x="3" y="8.500" width="8" height="5" rx="1" fill="#111"/><path d="M11 10 L14.500 8.500 V13 L11 12Z" fill="#111"/></svg>
<svg style="left:60.5px;top:70px" width="15" height="15" viewBox="0 0 15 15"><g transform="scale(.8)"><circle cx="4.500" cy="5" r="3.300" fill="#ddd" stroke="#222" stroke-width="1"/><circle cx="10" cy="5" r="3" fill="#ddd" stroke="#222" stroke-width="1"/><circle cx="4.500" cy="5" r="1.200" fill="#222"/><circle cx="10" cy="5" r="1.100" fill="#222"/><rect x="3" y="8.500" width="8" height="5" rx="1" fill="#111"/><path d="M11 10 L14.500 8.500 V13 L11 12Z" fill="#111"/></g><rect x="9" y="6" width="5.500" height="8" fill="#e8e8e8" stroke="#333" stroke-width=".6"/><path d="M10 8 H13.500 M10 10 H13.500 M10 12 H13.500" stroke="#333" stroke-width=".7"/></svg>
<svg style="left:79px;top:70px" width="15" height="15" viewBox="0 0 15 15"><rect x="1.500" y="2.500" width="12" height="11" fill="#f4f4f4" stroke="#333" stroke-width=".7"/><rect x="4" y="4" width="2" height="8" fill="#fff" stroke="#667" stroke-width=".6"/><path d="M8.500 2.500 V11 L10 9.500 L11.500 11 V2.500Z" fill="#2e8a3a"/></svg>
<svg style="left:97px;top:70px" width="15" height="15" viewBox="0 0 15 15"><path d="M1 10.500 L9.500 13.500 L14 8.500 L5.500 6.500Z" fill="#f4f0d8" stroke="#333" stroke-width=".7"/><path d="M5 8.500 L11.500 2 L13 7 L7.500 11Z" fill="#4a9a3a" stroke="#dde8cc" stroke-width=".8"/></svg>
<svg style="left:116px;top:70px" width="15" height="15" viewBox="0 0 15 15"><path d="M3 1 V8 M0 4.500 H6.500" stroke="#d02020" stroke-width="1.300"/><circle cx="9.500" cy="6.500" r="3" fill="#f8e8e8" stroke="#c82020" stroke-width="1"/><path d="M8 6.500 H11" stroke="#c82020" stroke-width="1"/><path d="M1.500 14 L7 8.500" stroke="#d8b070" stroke-width="1.600"/></svg>
<svg style="left:134px;top:70px" width="15" height="15" viewBox="0 0 15 15"><path d="M2 13.500 L5 8 L8 11Z" fill="#f8f0e0"/><path d="M5 8 L11 1.500 L14 4.500 L8 11Z" fill="#c41818"/><path d="M7 6 L10 9" stroke="#f0b0a0" stroke-width="1"/></svg>
<div style="left:160px;top:70.5px;width:17px;height:15px;background:#5a5a5a;border-radius:2px"></div>
<svg style="left:161px;top:70px" width="15" height="15" viewBox="0 0 15 15"><path d="M7.500 2 L14 6 L7.500 10 L1 6Z" fill="#e8e8e8" stroke="#222" stroke-width=".8"/><path d="M1 8.500 L7.500 12.500 L14 8.500" fill="none" stroke="#222" stroke-width=".9"/><path d="M4 6 L7.500 8 L11 6 L7.500 4Z" fill="#888"/></svg>
<svg style="left:180px;top:70px" width="15" height="15" viewBox="0 0 15 15"><rect x="0.500" y="2.500" width="14" height="10" fill="#e8eef8" stroke="#223" stroke-width="1"/><path d="M2 4 H13 M2 11 H13" stroke="#223" stroke-width="1.400" stroke-dasharray="1.500 1.200"/><rect x="3.500" y="5.500" width="2" height="4" fill="#446"/><rect x="6.500" y="5.500" width="2" height="4" fill="#446"/><rect x="9.500" y="5.500" width="2" height="4" fill="#446"/></svg>
<svg style="left:198.5px;top:70px" width="15" height="15" viewBox="0 0 15 15"><rect x="0.500" y="1.500" width="14" height="12" fill="#f4f4f4" stroke="#aaa" stroke-width=".6"/><circle cx="7.500" cy="7.500" r="4.500" fill="#3a78c8"/><circle cx="6.300" cy="6" r="1.800" fill="#9cc4f0"/></svg>
<div style="left:216.5px;top:70.5px;width:16px;height:15px;background:#8a8a8a;border-radius:2px"></div>
<svg style="left:217px;top:70px" width="15" height="15" viewBox="0 0 15 15"><rect x="1.500" y="2" width="12" height="11.500" fill="#d8d8d8" stroke="#f4f4f4" stroke-width=".8"/><circle cx="7.500" cy="7.500" r="4" fill="#a8a8a8" stroke="#eee" stroke-width=".8"/></svg>
<svg style="left:235px;top:70px" width="15" height="15" viewBox="0 0 15 15"><rect x="1" y="2" width="13" height="11.500" fill="#ddd" stroke="#333" stroke-width=".8"/><path d="M1 2 L14 13.500 M14 2 L1 13.500 M7.500 2 V13.500 M1 7.700 H14" stroke="#333" stroke-width=".8"/><circle cx="7.500" cy="7.700" r="2.800" fill="none" stroke="#333" stroke-width=".8"/></svg>
<svg style="left:253.5px;top:70px" width="15" height="15" viewBox="0 0 15 15"><rect x="0.500" y="2" width="14" height="11.500" fill="#eef2e8" stroke="#aaa" stroke-width=".6"/><circle cx="5" cy="6" r="2" fill="#3a78c8"/><circle cx="10.500" cy="6.500" r="2" fill="#3a78c8"/><circle cx="7.500" cy="10.500" r="2" fill="#3a78c8"/></svg>
<svg style="left:271.5px;top:70px" width="15" height="15" viewBox="0 0 15 15"><rect x="0.500" y="1.500" width="14" height="12" fill="#f0f4e8" stroke="#6a8a5a" stroke-width=".8"/><text x="7.500" y="12" text-anchor="middle" font-size="11.500" font-weight="bold" font-family="Liberation Serif,serif" fill="#222">T</text></svg>
<svg style="left:300.5px;top:70px" width="15" height="15" viewBox="0 0 15 15"><path d="M1.500 4.500 L8.500 2 L13.500 4 V11 L6.500 13.500 L1.500 11.500Z" fill="#4a4a4a" stroke="#e4e4e4" stroke-width="1"/><path d="M1.500 4.500 L6.500 6.500 L13.500 4 M6.500 6.500 V13.500" fill="none" stroke="#e4e4e4" stroke-width="1"/></svg>
<div style="left:317px;top:70.5px;width:17px;height:15px;background:#5a5a5a;border-radius:2px"></div>
<svg style="left:318px;top:70px" width="15" height="15" viewBox="0 0 15 15"><path d="M1.500 4.500 L8.500 2 L13.500 4 V11 L6.500 13.500 L1.500 11.500Z" fill="#4a86d8" stroke="#8ab4ec" stroke-width="1"/><path d="M1.500 4.500 L6.500 6.500 L13.500 4 M6.500 6.500 V13.500" fill="none" stroke="#a8c8f4" stroke-width="1"/></svg>
<svg style="left:336.5px;top:70px" width="15" height="15" viewBox="0 0 15 15"><rect x="3" y="2" width="9.500" height="11" fill="#222"/><circle cx="7.500" cy="7.500" r="3.600" fill="#8a8a8a"/><path d="M7.500 3.900 A3.600 3.600 0 0 1 7.500 11.100Z" fill="#222"/><path d="M4 1.500 H1.500 V13.500 H4 M11.500 1.500 H14 V13.500 H11.500" fill="none" stroke="#58d048" stroke-width="1.500"/></svg>
<div style="left:354px;top:70.5px;width:17px;height:15px;background:#5a5a5a;border-radius:2px"></div>
<svg style="left:355px;top:70px" width="15" height="15" viewBox="0 0 15 15"><path d="M1.500 4.500 L8.500 2 L13.500 4 V11 L6.500 13.500 L1.500 11.500Z" fill="#c4daf4" stroke="#5a8ad0" stroke-width="1"/><path d="M1.500 4.500 L6.500 6.500 L13.500 4 M6.500 6.500 V13.500" fill="none" stroke="#5a8ad0" stroke-width="1"/></svg>
<svg style="left:373.5px;top:70px" width="15" height="15" viewBox="0 0 15 15"><circle cx="7.500" cy="7.500" r="6.200" fill="#f4f4f4"/><path d="M7.500 1.300 A6.200 6.200 0 0 1 13.700 7.500 H7.500Z M7.500 13.700 A6.200 6.200 0 0 1 1.300 7.500 H7.500Z" fill="#111"/><path d="M4.400 2.200 A6.200 6.200 0 0 1 7.500 1.300 V4.400 H4.400Z M10.600 4.400 H7.500 V7.500 H10.600Z M4.400 7.500 V10.600 H7.500 V7.500Z" fill="#111" opacity=".0"/><path d="M4.300 4.300 H7.500 V7.500 H4.300Z M7.500 7.500 H10.700 V10.700 H7.500Z" fill="#111"/><path d="M7.500 4.300 H10.700 V7.500 H7.500Z M4.300 7.500 H7.500 V10.700 H4.300Z" fill="#f4f4f4"/></svg>
<svg style="left:392px;top:70px" width="15" height="15" viewBox="0 0 15 15"><circle cx="7.500" cy="7.500" r="6" fill="url(#gyel)"/></svg>
<svg style="left:409.5px;top:70px" width="15" height="15" viewBox="0 0 15 15"><circle cx="7.500" cy="7.500" r="5.800" fill="url(#ggry)"/></svg>
<svg style="left:438px;top:70px" width="15" height="15" viewBox="0 0 15 15"><path d="M2 12.500 H13 L14.500 14.500 H0.500Z" fill="#222"/><path d="M2 12 A5.500 5.500 0 1 1 13 12Z" fill="#c8c8c8"/><circle cx="6" cy="6.500" r="2.500" fill="#f4f4f4"/></svg>
<svg style="left:457px;top:70px" width="15" height="15" viewBox="0 0 15 15"><ellipse cx="7.500" cy="7.500" rx="6.500" ry="5.500" fill="#8a5a20"/><ellipse cx="6.500" cy="6" rx="4" ry="3" fill="#d89838"/><circle cx="5.500" cy="5.500" r="1.400" fill="#f8e0a0"/></svg>
<svg style="left:475.5px;top:70px" width="15" height="15" viewBox="0 0 15 15"><circle cx="7.500" cy="7.500" r="5.800" fill="#c4c4c4"/><path d="M7.500 1.700 A5.800 5.800 0 0 0 7.500 13.300Z" fill="#3a3a3a"/><path d="M7.500 0.500 V14.500" stroke="#222" stroke-width=".8"/></svg>
<svg style="left:494px;top:70px" width="15" height="15" viewBox="0 0 15 15"><path d="M2 6 L9 3.500 L13.500 5 V11 L7 13.500 L2 12Z" fill="#4a80d0"/><path d="M2 6 L9 3.500 L13.500 5 L7 7.500Z" fill="#a0c4f0"/><path d="M9 1 L14.500 3" stroke="#88a" stroke-width="1"/></svg>
<svg style="left:522.5px;top:70px" width="15" height="15" viewBox="0 0 15 15"><rect x="1.500" y="1.500" width="11" height="10.500" fill="none" stroke="#48c838" stroke-width="1.200" stroke-dasharray="1.800 1.300"/><path d="M8 6 V14 L10 12.200 L11.300 14.800 L12.500 14.200 L11.300 11.800 L13.800 11.800Z" fill="#e83030" stroke="#fff" stroke-width=".5"/></svg>
<div style="left:549.5px;top:70.5px;width:17px;height:15px;background:#3a3a3a;border-radius:2px"></div>
<svg style="left:550.5px;top:70px" width="15" height="15" viewBox="0 0 15 15"><path d="M1.500 4.500 L8.500 2 L13.500 4 V11 L6.500 13.500 L1.500 11.500Z" fill="#3a3a3a" stroke="#e8e8e8" stroke-width="1"/><path d="M1.500 4.500 L6.500 6.500 L13.500 4 M6.500 6.500 V13.500" fill="none" stroke="#e8e8e8" stroke-width="1"/></svg>
<div style="left:568px;top:70.5px;width:17px;height:15px;background:#3a3a3a;border-radius:2px"></div>
<svg style="left:569px;top:70px" width="15" height="15" viewBox="0 0 15 15"><rect x="2" y="5" width="8" height="8" fill="none" stroke="#e0e0e0" stroke-width="1.100"/><rect x="5.500" y="2" width="8" height="8" fill="none" stroke="#e0e0e0" stroke-width="1.100"/></svg>
<div style="left:586px;top:70.5px;width:17px;height:15px;background:#3a3a3a;border-radius:2px"></div>
<svg style="left:587px;top:70px" width="15" height="15" viewBox="0 0 15 15"><path d="M4 7.500 L11 3.500 M4 7.500 L11 11.500" stroke="#eee" stroke-width="1.200"/><circle cx="4" cy="7.500" r="2.200" fill="#eee"/><circle cx="11" cy="3.500" r="2.200" fill="#eee"/><circle cx="11" cy="11.500" r="2.200" fill="#eee"/></svg>
<svg width="0" height="0" style="left:0;top:0"><defs><radialGradient id="gyel"><stop offset="0" stop-color="#ffff60"/><stop offset=".55" stop-color="#e0e020"/><stop offset="1" stop-color="#e0e020" stop-opacity="0"/></radialGradient><radialGradient id="ggry" cx=".4" cy=".35"><stop offset="0" stop-color="#e8e8e8"/><stop offset="1" stop-color="#6a6a6a"/></radialGradient></defs></svg>
<div style="left:30.5px;top:87px;width:946px;height:653.5px;background:#a3a3a3"></div>
<svg style="left:30.5px;top:87px" width="946" height="653.5" viewBox="534.5 580 946 653.5">
<path d="M-1828.7 914.8 L-99126.8 14621.4 M-1828.7 914.8 L899.3 736.9 M-1591.6 899.4 L-93707.7 14641.7 M-2118.2 955.6 L916.6 745.2 M-1375.9 885.3 L-88288.7 14661.9 M-2487.3 1007.6 L935.8 754.3 M-1178.8 872.5 L-82869.6 14682.2 M-2974.2 1076.2 L957.1 764.6 M-998.0 860.7 L-77450.6 14702.5 M-3645.8 1170.8 L981.1 776.1 M-831.6 849.8 L-72031.5 14722.7 M-4631.8 1309.7 L1008.3 789.0 M-677.8 839.8 L-66612.4 14743.0 M-6220.5 1533.5 L1039.2 803.8 M-535.4 830.5 L-61193.4 14763.2 M-9207.9 1954.4 L1074.8 820.9 M-403.1 821.9 L-55774.3 14783.5 M-16893.6 3037.1 L1116.1 840.7 M-279.9 813.8 L-50355.3 14803.7 M-81149.7 12089.0 L1164.8 864.0 M-164.8 806.3 L-44936.2 14824.0 M-87907.8 14663.4 L1223.0 891.8 M-57.1 799.3 L-39517.2 14844.2 M-76110.9 14707.5 L1293.6 925.6 M43.9 792.7 L-34098.1 14864.5 M-64313.9 14751.5 L1381.3 967.5 M138.8 786.5 L-28679.0 14884.7 M-52516.9 14795.6 L1493.0 1021.0 M228.2 780.7 L-23260.0 14905.0 M-40720.0 14839.7 L1640.2 1091.4 M312.5 775.2 L-17840.9 14925.2 M-28923.0 14883.8 L1843.0 1188.5 M392.1 770.0 L-12421.9 14945.5 M-17126.0 14927.9 L2140.2 1330.7 M467.4 765.1 L-7002.8 14965.7 M-5329.1 14972.0 L2617.8 1559.2 M538.8 760.4 L-1583.8 14986.0 M6467.9 15016.1 L3511.2 1986.7 M606.6 756.0 L3835.3 15006.2 M18264.8 15060.2 L5782.9 3073.8 M671.0 751.8 L9254.4 15026.5 M30061.8 15104.3 L23385.4 11497.0 M732.2 747.8 L14673.4 15046.8 M790.6 744.0 L20092.5 15067.0 M846.2 740.4 L25511.5 15087.3 M899.3 736.9 L30930.6 15107.5" stroke="#7c7c7c" stroke-width="0.9" fill="none"/>
<path d="M34.4 1250.1 L1381.3 967.5" stroke="#050505" stroke-width="2"/>
<path d="M535 1110.700 L812 1087.700 M535 1126 L812 1087.700 M535 1160 L812 1087.700 M535 1175 L812 1087.700 M535 1118 L790 1090" stroke="#2a1050" stroke-width="1.100" fill="none"/>
<g fill="none" stroke="#b030d0" stroke-width="1"><path d="M815.500 1084 L822 1056 L838 1038 L855.800 1026.300 L884 1032 L905 1048 L915 1070 L912 1092 L896 1110 L872 1121 L846 1120 L826 1106Z"/><ellipse cx="865" cy="1080" rx="49" ry="27"/><path d="M855.800 1026.300 L852 1060 L853 1120 M855.800 1026.300 L868 1040 L876 1118 M822 1056 Q865 1040 905 1048 M826 1106 Q866 1122 912 1092"/></g>
<path d="M839.500 1077 L850.300 1233 L890.500 1076Z" fill="#303032"/><path d="M839.500 1077 L850.300 1233 L852 1096Z" fill="#141416"/><path d="M866 1096 L850.300 1233 L880 1092Z" fill="#424244"/><path d="M880 1092 L850.300 1233 L890.500 1076Z" fill="#1a1a1c"/>
<ellipse cx="865" cy="1075" rx="26" ry="21" fill="#050208" stroke="#b030d0" stroke-width="2.200"/>
<path d="M839.500 1077 L850.300 1233 L890.500 1076 M852 1096 L850.300 1233 M868 1096 L850.300 1233" fill="none" stroke="#b030d0" stroke-width="1"/>
<path d="M856 1058 L872 1082" stroke="#bbb" stroke-width=".8"/>
<path d="M899.800 1029.300 L920.300 1034.800 L930.400 1106.400 L910.300 1092.900Z M899.800 1029.300 L1253 996 M920.300 1034.800 L1253 997 M930.400 1106.400 L1256 1000 M910.300 1092.900 L1256 999" fill="none" stroke="#b030d0" stroke-width="1"/>
<ellipse cx="1284" cy="991.500" rx="196.500" ry="190.500" fill="none" stroke="#a2d8ee" stroke-width="1.100"/>
<ellipse cx="1283" cy="991.600" rx="172.500" ry="165.600" fill="none" stroke="#484848" stroke-width="1"/>
<path d="M1347.6 1145.1 L1339.3 1148.1 L1330.8 1150.7 L1322.2 1152.9 L1313.5 1154.6 L1304.8 1155.9 L1295.9 1156.7 L1287.1 1157.2 L1278.2 1157.1 L1269.3 1156.7 L1260.5 1155.8 L1251.7 1154.5 L1243.0 1152.7 L1234.4 1150.5 L1226.0 1147.9 L1217.7 1144.9 L1209.6 1141.4 L1201.6 1137.6 L1193.9 1133.4 L1186.4 1128.8 L1179.2 1123.9 L1172.2 1118.5 L1165.6 1112.9 L1159.2 1106.9 L1153.2 1100.7 L1147.5 1094.1 L1142.2 1087.3 L1137.3 1080.2 L1132.7 1072.9 L1128.6 1065.4 L1124.8 1057.6 L1121.5 1049.7 L1118.6 1041.7 L1116.1 1033.5 L1114.1 1025.2 L1112.5 1016.8 L1111.4 1008.3 L1110.7 999.8 L1110.5 991.3 L1110.7 982.8 L1111.4 974.3 L1112.6 965.8 L1114.2 957.5 L1116.3 949.2 L1118.8 941.0 L1121.7 932.9 L1125.0 925.0 L1128.8 917.3 L1133.0 909.8 L1137.6 902.5 L1142.6 895.4 L1147.9 888.6 L1153.6 882.1 L1159.6 875.8 L1166.0 869.9 L1172.7 864.3 L1179.7 859.0 L1186.9 854.1 L1194.4 849.5 L1202.1 845.3 L1210.1 841.5" fill="none" stroke="#3aa020" stroke-width="1.500"/>
<path d="M1347.6 1145.1 L1346.1 1145.7 L1344.6 1146.3 L1343.1 1146.8 L1341.6 1147.3 L1340.1 1147.9 L1338.6 1148.4 L1337.1 1148.9 L1335.5 1149.3 L1334.0 1149.8 L1332.5 1150.2 L1330.9 1150.7 L1329.4 1151.1 L1327.8 1151.5 L1326.3 1151.9 L1324.7 1152.3 L1323.2 1152.6 L1321.6 1153.0 L1320.0 1153.3 L1318.5 1153.7 L1316.9 1154.0 L1315.3 1154.3 L1313.7 1154.5 L1312.2 1154.8 L1310.6 1155.1 L1309.0 1155.3 L1307.4 1155.5 L1305.8 1155.7 L1304.2 1155.9 L1302.6 1156.1 L1301.0 1156.3 L1299.4 1156.4 L1297.8 1156.6 L1296.2 1156.7 L1294.6 1156.8 L1293.0 1156.9 L1291.4 1157.0 L1289.8 1157.1 L1288.2 1157.1 L1286.6 1157.2 L1285.0 1157.2 L1283.4 1157.2 L1281.8 1157.2 L1280.2 1157.2 L1278.6 1157.1 L1277.0 1157.1 L1275.4 1157.0 L1273.8 1157.0 L1272.2 1156.9 L1270.6 1156.8 L1269.0 1156.7 L1267.4 1156.5 L1265.8 1156.4 L1264.2 1156.2 L1262.6 1156.0 L1261.0 1155.8 L1259.4 1155.6 L1257.8 1155.4 L1256.2 1155.2 L1254.6 1154.9 L1253.0 1154.7" fill="none" stroke="#8ee060" stroke-width="1.500" stroke-dasharray="7 3"/>
<path d="M1161.0 874.5 L1161.7 873.8 L1162.5 873.1 L1163.2 872.5 L1163.9 871.8 L1164.6 871.1 L1165.4 870.5 L1166.1 869.8 L1166.8 869.2 L1167.6 868.5 L1168.3 867.9 L1169.1 867.3 L1169.8 866.6 L1170.6 866.0 L1171.4 865.4 L1172.1 864.7 L1172.9 864.1 L1173.7 863.5 L1174.4 862.9 L1175.2 862.3 L1176.0 861.7 L1176.8 861.1 L1177.6 860.5 L1178.4 859.9 L1179.2 859.3 L1180.0 858.8 L1180.8 858.2 L1181.6 857.6 L1182.4 857.1 L1183.2 856.5 L1184.1 855.9 L1184.9 855.4 L1185.7 854.9 L1186.5 854.3 L1187.4 853.8 L1188.2 853.2 L1189.0 852.7 L1189.9 852.2 L1190.7 851.7 L1191.6 851.2 L1192.4 850.7 L1193.3 850.2 L1194.2 849.7 L1195.0 849.2 L1195.9 848.7 L1196.8 848.2 L1197.6 847.7 L1198.5 847.2 L1199.4 846.8 L1200.2 846.3 L1201.1 845.8 L1202.0 845.4 L1202.9 844.9 L1203.8 844.5 L1204.7 844.0 L1205.6 843.6 L1206.5 843.2 L1207.4 842.8 L1208.3 842.3 L1209.2 841.9 L1210.1 841.5" fill="none" stroke="#8ee060" stroke-width="1.500" stroke-dasharray="5 2"/>
<path d="M1211.800 843.500 C 1240 870, 1275 940, 1296 1000 C 1318 1060, 1352 1120, 1347 1146" fill="none" stroke="#cc3030" stroke-width="1"/>
<path d="M1209 841 Q1212 838 1215 846" fill="none" stroke="#e8e040" stroke-width="1.300"/>
<path d="M1219 867 L1332 1121.700" stroke="#8ee8a0" stroke-width="1.100"/>
<path d="M1124 1053 L1441.800 921.800" stroke="#2828d8" stroke-width="1.400"/>
<g fill="none" stroke="#b030d0" stroke-width="1"><circle cx="1275" cy="990" r="32"/><ellipse cx="1275" cy="990" rx="32" ry="20" transform="rotate(-20 1275 990)"/><ellipse cx="1278" cy="992" rx="20" ry="33" transform="rotate(-15 1278 992)"/><path d="M1253 975 L1268 960 L1290 962 L1306 985 L1300 1012 L1280 1024 L1256 1012 L1246 992Z"/></g>
<path d="M1283 971 L1306.500 975.500 L1296 990Z" fill="#050208" stroke="#b030d0" stroke-width="1.200"/><circle cx="1276.700" cy="991.800" r="21.500" fill="#050208" stroke="#b030d0" stroke-width="1.500"/><path d="M1286 972.500 L1304 976 L1296.500 987Z" fill="#050208"/>
<path d="M1262 1004 L1312 980 M1268 1012 L1300 978" stroke="#3030c0" stroke-width="1"/>
<path d="M1294 946.400 L1376 949 L1321.400 1009.400Z M1294 946.400 L1310 985 M1312 980 L1376 949" fill="none" stroke="#b030d0" stroke-width="1"/>
<g fill="none" stroke="#b030d0" stroke-width="1"><circle cx="1411.700" cy="935.500" r="37.500"/><ellipse cx="1411.700" cy="935.500" rx="13" ry="37.500" transform="rotate(-8 1411.700 935.500)"/><ellipse cx="1405" cy="935.500" rx="22" ry="36" transform="rotate(-8 1405 935.500)"/></g>
<path d="M1296 982 L1441.800 921.800" stroke="#3a28d8" stroke-width="1.600"/>
<g transform="translate(1329,1063)"><rect x="0.500" y="0.500" width="9" height="9" fill="#d8d8d8" stroke="#333" stroke-width="1"/><rect x="2.500" y="2.500" width="5" height="5" fill="#888"/><path d="M6 6 L6 17 L8.800 14.300 L11 19 L13 18 L10.800 13.500 L14.500 13.500Z" fill="#fff" stroke="#222" stroke-width=".9"/></g>
</svg>
<div style="left:976.5px;top:50px;width:237px;height:691px;background:#444"></div>
<div style="left:1213px;top:1px;width:29.8px;height:739.8px;background:#000"></div>
<div style="left:1242.8px;top:0px;width:5.2px;height:742px;background:linear-gradient(90deg,#fff 0,#fff 1.200px,#e5e5e5 1.200px,#e5e5e5 4.800px,#fff 5.200px)"></div>
<div style="left:0px;top:740.8px;width:1244px;height:4.2px;background:linear-gradient(#fff 0,#fff 1.200px,#e6e6e6 1.200px,#e6e6e6 3.800px,#fff 4.200px)"></div>
<div style="left:1207px;top:2px;width:6px;height:48px;background:#3a3a3a"></div>
<div style="left:1244px;top:740.8px;width:4px;height:4.2px;background:#fff"></div>
<div style="left:1244px;top:742px;width:3.6px;height:2.6px;background:#e6e6e6"></div>
<div style="left:989px;top:56px;width:26px;height:4px;background:repeating-linear-gradient(135deg,#5a5a5a 0 1px,transparent 1px 3px)"></div>
<div style="left:1139px;top:56px;width:26px;height:4px;background:repeating-linear-gradient(135deg,#5a5a5a 0 1px,transparent 1px 3px)"></div>
<span class="t" style="left:1024.3px;top:53.5px;font-size:8.500px;letter-spacing:0;color:#d0d0d0">Channel Box / Layer Editor</span>
<div style="left:1167.5px;top:52px;width:10.5px;height:11px;border:1px solid #5c5c5c;border-radius:1px;background:#2c2c2c"></div>
<svg style="left:1169px;top:53.5px" width="8" height="8" viewBox="0 0 8 8"><rect x="2.500" y="0.500" width="5" height="4" fill="none" stroke="#eee" stroke-width="1"/><rect x="0.500" y="3" width="5" height="4" fill="#2c2c2c" stroke="#ddd" stroke-width="1"/></svg>
<div style="left:1181.5px;top:52px;width:11px;height:11px;border:1px solid #5c5c5c;border-radius:1px;background:#2c2c2c"></div>
<svg style="left:1183px;top:53.5px" width="8" height="8" viewBox="0 0 8 8"><path d="M1 1 L7 7 M7 1 L1 7" stroke="#eee" stroke-width="1.300"/></svg>
<svg style="left:1136px;top:69px" width="16" height="15" viewBox="0 0 16 15"><path d="M8.500 10 V2.500" stroke="#30b030" stroke-width="1.300"/><path d="M6.500 4.500 L8.500 1 L10.500 4.500Z" fill="#30b030"/><path d="M8.500 10 L14 13" stroke="#d03030" stroke-width="1.300"/><path d="M8.500 10 L2.500 12.500" stroke="#3050d0" stroke-width="1.300"/><circle cx="8.500" cy="10" r="1.500" fill="#e8c030"/></svg>
<svg style="left:1156px;top:69px" width="15" height="15" viewBox="0 0 15 15"><circle cx="7.500" cy="7.500" r="6" fill="#555" stroke="#aaa" stroke-width="1.500"/><path d="M7.500 2.500 A5 5 0 0 1 7.500 12.500 A3 5 0 0 0 7.500 2.500Z" fill="#ccc"/></svg>
<svg style="left:1175px;top:69px" width="15" height="15" viewBox="0 0 15 15"><path d="M2 13 L11 4" stroke="#8a8a8a" stroke-width="2"/><path d="M8 2.500 L13.500 1.500 L12.500 7Z" fill="#9a9a9a"/></svg>
<span class="t" style="left:991.5px;top:91px;">Channels</span>
<span class="t" style="left:1045.5px;top:91px;">Edit</span>
<span class="t" style="left:1076px;top:91px;">Object</span>
<span class="t" style="left:1119px;top:91px;">Show</span>
<div style="left:986px;top:106px;width:205px;height:326px;background:#454545;border:1px solid #363636"></div>
<div style="left:986px;top:431.5px;width:205px;height:132px;background:#2b2b2b;border:1px solid #363636;border-top:none"></div>
<span class="t" style="left:990px;top:112.5px;font-weight:bold;font-size:9.800px;color:#e0e0e0;letter-spacing:0.500px">locator1</span>
<div style="left:1128.5px;top:125.4px;width:59px;height:13.2px;background:#3a3a3a"></div>
<span class="t" style="left:926.5px;top:126.9px;width:200px;text-align:right;">Translate X</span>
<span class="t" style="left:1129.5px;top:126.9px;">11</span>
<div style="left:1128.5px;top:140.1px;width:59px;height:13.2px;background:#3a3a3a"></div>
<span class="t" style="left:926.5px;top:141.6px;width:200px;text-align:right;">Translate Y</span>
<span class="t" style="left:1129.5px;top:141.6px;">0</span>
<div style="left:1128.5px;top:154.8px;width:59px;height:13.2px;background:#3a3a3a"></div>
<span class="t" style="left:926.5px;top:156.3px;width:200px;text-align:right;">Translate Z</span>
<span class="t" style="left:1129.5px;top:156.3px;">0</span>
<div style="left:1128.5px;top:169.5px;width:59px;height:13.2px;background:#3a3a3a"></div>
<span class="t" style="left:926.5px;top:171px;width:200px;text-align:right;">Rotate X</span>
<span class="t" style="left:1129.5px;top:171px;">410.178</span>
<div style="left:1128.5px;top:184.2px;width:59px;height:13.2px;background:#3a3a3a"></div>
<span class="t" style="left:926.5px;top:185.7px;width:200px;text-align:right;">Rotate Y</span>
<span class="t" style="left:1129.5px;top:185.7px;">-21.045</span>
<div style="left:1128.5px;top:198.9px;width:59px;height:13.2px;background:#3a3a3a"></div>
<span class="t" style="left:926.5px;top:200.4px;width:200px;text-align:right;">Rotate Z</span>
<span class="t" style="left:1129.5px;top:200.4px;">27.303</span>
<div style="left:1128.5px;top:213.6px;width:59px;height:13.2px;background:#3a3a3a"></div>
<span class="t" style="left:926.5px;top:215.1px;width:200px;text-align:right;">Scale X</span>
<span class="t" style="left:1129.5px;top:215.1px;">1</span>
<div style="left:1128.5px;top:228.3px;width:59px;height:13.2px;background:#3a3a3a"></div>
<span class="t" style="left:926.5px;top:229.8px;width:200px;text-align:right;">Scale Y</span>
<span class="t" style="left:1129.5px;top:229.8px;">1</span>
<div style="left:1128.5px;top:243px;width:59px;height:13.2px;background:#3a3a3a"></div>
<span class="t" style="left:926.5px;top:244.5px;width:200px;text-align:right;">Scale Z</span>
<span class="t" style="left:1129.5px;top:244.5px;">1</span>
<div style="left:1128.5px;top:257.7px;width:59px;height:13.2px;background:#3a3a3a"></div>
<span class="t" style="left:926.5px;top:259.2px;width:200px;text-align:right;">Visibility</span>
<span class="t" style="left:1129.5px;top:259.2px;">on</span>
<span class="t" style="left:989.7px;top:273.5px;font-weight:bold;font-size:9.800px;color:#e0e0e0">SHAPES</span>
<div style="left:987px;top:286.5px;width:203px;height:13.5px;background:#4e4e4e"></div>
<span class="t" style="left:998px;top:288px;font-weight:bold;font-size:9.800px;color:#e0e0e0;letter-spacing:0.500px">locatorShape1</span>
<span class="t" style="left:929px;top:303px;width:200px;text-align:right;">Local Position X</span>
<span class="t" style="left:1130.5px;top:303px;">0</span>
<span class="t" style="left:929px;top:317.7px;width:200px;text-align:right;">Local Position Y</span>
<span class="t" style="left:1130.5px;top:317.7px;">0</span>
<span class="t" style="left:929px;top:332.4px;width:200px;text-align:right;">Local Position Z</span>
<span class="t" style="left:1130.5px;top:332.4px;">0</span>
<span class="t" style="left:929px;top:347.1px;width:200px;text-align:right;">Local Scale X</span>
<span class="t" style="left:1130.5px;top:347.1px;">1</span>
<span class="t" style="left:929px;top:361.8px;width:200px;text-align:right;">Local Scale Y</span>
<span class="t" style="left:1130.5px;top:361.8px;">1</span>
<span class="t" style="left:929px;top:376.5px;width:200px;text-align:right;">Local Scale Z</span>
<span class="t" style="left:1130.5px;top:376.5px;">1</span>
<span class="t" style="left:989.7px;top:391.3px;font-weight:bold;font-size:9.800px;color:#e0e0e0">OUTPUTS</span>
<span class="t" style="left:998px;top:406.3px;font-weight:bold;font-size:9.800px;color:#e0e0e0;letter-spacing:0.500px">expression1</span>
<div style="left:1054px;top:568px;width:66px;height:2px;background:repeating-linear-gradient(90deg,#6a6a6a 0 2px,transparent 2px 5px)"></div>
<div style="left:980.5px;top:372px;width:2px;height:240px;background:repeating-linear-gradient(0deg,#5e5e5e 0 2px,transparent 2px 5px)"></div>
<div style="left:986px;top:594px;width:205.5px;height:147px;background:#454545;border:1px solid #393939;border-bottom:none"></div>
<div style="left:986px;top:575.5px;width:51.5px;height:19px;background:linear-gradient(#686868,#5a5a5a);border:1px solid #707070;border-bottom:none;border-radius:3px 3px 0 0"></div>
<div style="left:1039px;top:578.5px;width:54px;height:15.5px;background:#464646;border:1px solid #2e2e2e;border-bottom:none;border-radius:2px 2px 0 0"></div>
<div style="left:1093.5px;top:578.5px;width:40px;height:15.5px;background:#464646;border:1px solid #2e2e2e;border-bottom:none;border-radius:2px 2px 0 0"></div>
<span class="t" style="left:995.3px;top:580px;">Display</span>
<span class="t" style="left:1048.5px;top:581px;">Render</span>
<span class="t" style="left:1103px;top:581px;">Anim</span>
<span class="t" style="left:994.4px;top:599px;">Layers</span>
<span class="t" style="left:1037.6px;top:599px;">Options</span>
<span class="t" style="left:1085px;top:599px;">Help</span>
<svg style="left:1100px;top:617px" width="16" height="15" viewBox="0 0 16 15"><path d="M4 4 L10 2 L15 4 L9 6.500Z" fill="#8a8a8a"/><path d="M4 7 L9 9 L15 7 V8.500 L9 11 L4 8.500Z" fill="#f4f4f4"/><path d="M4 10 L9 12 L15 10 V11.500 L9 14 L4 11.500Z" fill="#d8d8d8"/><path d="M1.500 2 V13" stroke="#d02020" stroke-width="1.300"/></svg>
<svg style="left:1122px;top:617px" width="16" height="15" viewBox="0 0 16 15"><path d="M4 4 L10 2 L15 4 L9 6.500Z" fill="#f8f8f8"/><path d="M4 7 L9 9 L15 7 V8.500 L9 11 L4 8.500Z" fill="#f4f4f4"/><path d="M4 10 L9 12 L15 10 V11.500 L9 14 L4 11.500Z" fill="#d8d8d8"/><path d="M1.500 2 V13" stroke="#d02020" stroke-width="1.300"/></svg>
<svg style="left:1147px;top:615px" width="17" height="17" viewBox="0 0 17 17"><path d="M1 13 L9 9 L15 12 L7 16.500Z" fill="#f8f8f8"/><path d="M12.500 1 L13.500 4 L16.500 5 L13.500 6 L12.500 9 L11.500 6 L8.500 5 L11.500 4Z" fill="#f0b040"/></svg>
<svg style="left:1168px;top:615px" width="17" height="17" viewBox="0 0 17 17"><path d="M1 13 L9 9 L15 12 L7 16.500Z" fill="#e8e8f0"/><circle cx="6.500" cy="10.500" r="3" fill="#4a78c8"/><path d="M12.500 1 L13.500 4 L16.500 5 L13.500 6 L12.500 9 L11.500 6 L8.500 5 L11.500 4Z" fill="#f0b040"/></svg>
<div style="left:989px;top:637px;width:198.5px;height:104px;background:#2d2d2d;border:1px solid #383838;border-bottom:none"></div>
<div style="left:1194.5px;top:52px;width:16.5px;height:88px;background:#474747;border:1px solid #383838;border-radius:0 3px 3px 0"></div>
<div style="left:1194.5px;top:140.5px;width:16.5px;height:76px;background:#474747;border:1px solid #383838;border-radius:0 3px 3px 0"></div>
<div style="left:1194px;top:216.5px;width:18.5px;height:139px;background:#5e5e5e;border:1px solid #6e6e6e;border-left:none;border-radius:0 3px 3px 0"></div>
<span class="t" style="left:1208px;top:60.4px;transform-origin:0 0;transform:rotate(90deg);font-size:10.300px;letter-spacing:-0.100px;color:#ddd">Attribute Editor</span>
<span class="t" style="left:1208px;top:149.8px;transform-origin:0 0;transform:rotate(90deg);font-size:10.300px;letter-spacing:-0.100px;color:#ddd">Tool Settings</span>
<span class="t" style="left:1208px;top:228.3px;transform-origin:0 0;transform:rotate(90deg);font-size:10.300px;letter-spacing:-0.100px;color:#ddd">Channel Box / Layer Editor</span>
</div>
</body></html>
